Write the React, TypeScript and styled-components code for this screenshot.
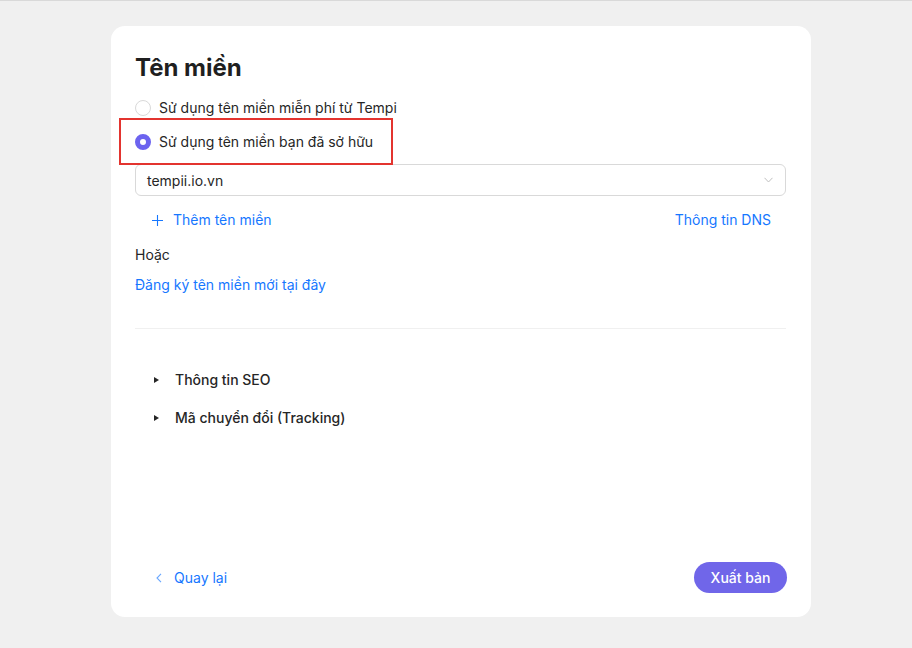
import React from "react";
import styled, { createGlobalStyle } from "styled-components";

const Global = createGlobalStyle`
  html, body { margin: 0; padding: 0; background: #f0f0f0; }
  body { font-family: Inter, "Noto Sans", sans-serif; color: #1f1f1f; -webkit-font-smoothing: antialiased; }
  * { box-sizing: border-box; }
`;

const Page = styled.div`
  width: 912px;
  height: 648px;
  border-top: 1px solid #d9d9d9;
  padding: 25px 0 0 10px;
  display: flex;
  justify-content: center;
  align-items: flex-start;
`;

const Card = styled.div`
  width: 700px;
  height: 591px;
  background: #fff;
  border-radius: 14px;
  padding: 26px 25px 24px 24px;
  display: flex;
  flex-direction: column;
`;

const Title = styled.h1`
  margin: 0;
  font-size: 24px;
  line-height: 32px;
  font-weight: 700;
  color: #1f1f1f;
`;

const RadioGroup = styled.div`
  margin-top: 13px;
  display: flex;
  flex-direction: column;
  gap: 12px;
`;

const RadioRow = styled.label<{ $highlight?: boolean }>`
  position: relative;
  display: flex;
  align-items: center;
  gap: 8px;
  font-size: 14px;
  line-height: 22px;
  color: #262626;
  ${(p) =>
    p.$highlight &&
    `&::after {
      content: "";
      position: absolute;
      left: -16px;
      top: -13px;
      width: 270px;
      height: 43px;
      border: 2px solid #e3342f;
      pointer-events: none;
    }`}
`;

const RadioDot = styled.span<{ $checked?: boolean }>`
  width: 16px;
  height: 16px;
  border-radius: 50%;
  flex: none;
  background: #fff;
  border: ${(p) => (p.$checked ? "5px solid #6c63ef" : "1px solid #d9d9d9")};
`;

const Select = styled.div`
  margin-top: 11px;
  height: 32px;
  border: 1px solid #d9d9d9;
  border-radius: 6px;
  display: flex;
  align-items: center;
  justify-content: space-between;
  padding: 0 12px 0 11px;
  font-size: 14px;
  color: #262626;
`;

const LinkRow = styled.div`
  margin-top: 13px;
  display: flex;
  justify-content: space-between;
  align-items: center;
  padding: 0 15px 0 17px;
`;

const LinkText = styled.a`
  font-size: 14px;
  line-height: 22px;
  color: #1677ff;
  text-decoration: none;
  display: inline-flex;
  align-items: center;
  gap: 10px;
  cursor: pointer;
`;

const Plain = styled.div<{ $mt: number }>`
  margin-top: ${(p) => p.$mt}px;
  font-size: 14px;
  line-height: 22px;
  color: #262626;
`;

const BlockLink = styled(LinkText)<{ $mt: number }>`
  margin-top: ${(p) => p.$mt}px;
  align-self: flex-start;
`;

const Divider = styled.hr`
  margin: 32px 0 0;
  border: none;
  border-top: 1px solid #f0f0f0;
`;

const Collapse = styled.div`
  margin-top: 40px;
  display: flex;
  flex-direction: column;
  gap: 16px;
  padding-left: 19px;
`;

const CollapseHeader = styled.div`
  display: flex;
  align-items: center;
  gap: 16px;
  font-size: 14px;
  line-height: 22px;
  font-weight: 500;
  color: #262626;
`;

const Caret = styled.span`
  width: 0;
  height: 0;
  border-top: 3.5px solid transparent;
  border-bottom: 3.5px solid transparent;
  border-left: 5px solid #262626;
`;

const Footer = styled.div`
  margin-top: auto;
  display: flex;
  justify-content: space-between;
  align-items: center;
  padding-left: 21px;
`;

const BackLink = styled(LinkText)`
  gap: 12px;
`;

const PublishButton = styled.button`
  height: 31px;
  width: 93px;
  border: none;
  border-radius: 16px;
  background: #7066e9;
  color: #fff;
  font-family: inherit;
  font-size: 14px;
  font-weight: 500;
  margin-right: -1px;
  cursor: pointer;
`;

const Chevron = () => (
  <svg width="9" height="6" viewBox="0 0 9 6" fill="none">
    <path d="M0.5 0.8 L4.5 5 L8.5 0.8" stroke="#bfbfbf" strokeWidth="1" />
  </svg>
);

const Plus = () => (
  <svg width="11" height="11" viewBox="0 0 11 11" fill="none">
    <path d="M5.5 0 V11 M0 5.5 H11" stroke="#1677ff" strokeWidth="1.1" />
  </svg>
);

const Back = () => (
  <svg width="6" height="10" viewBox="0 0 6 10" fill="none">
    <path d="M5 0.8 L1 5 L5 9.2" stroke="#69a7ff" strokeWidth="1.1" />
  </svg>
);

export default function App() {
  return (
    <>
      <Global />
      <Page>
        <Card>
          <Title>Tên miền</Title>
          <RadioGroup>
            <RadioRow>
              <RadioDot />
              Sử dụng tên miền miễn phí từ Tempi
            </RadioRow>
            <RadioRow $highlight>
              <RadioDot $checked />
              Sử dụng tên miền bạn đã sở hữu
            </RadioRow>
          </RadioGroup>
          <Select>
            <span>tempii.io.vn</span>
            <Chevron />
          </Select>
          <LinkRow>
            <LinkText>
              <Plus />
              Thêm tên miền
            </LinkText>
            <LinkText>Thông tin DNS</LinkText>
          </LinkRow>
          <Plain $mt={13}>Hoặc</Plain>
          <BlockLink $mt={8}>Đăng ký tên miền mới tại đây</BlockLink>
          <Divider />
          <Collapse>
            <CollapseHeader>
              <Caret />
              Thông tin SEO
            </CollapseHeader>
            <CollapseHeader>
              <Caret />
              Mã chuyển đổi (Tracking)
            </CollapseHeader>
          </Collapse>
          <Footer>
            <BackLink>
              <Back />
              Quay lại
            </BackLink>
            <PublishButton>Xuất bản</PublishButton>
          </Footer>
        </Card>
      </Page>
    </>
  );
}
